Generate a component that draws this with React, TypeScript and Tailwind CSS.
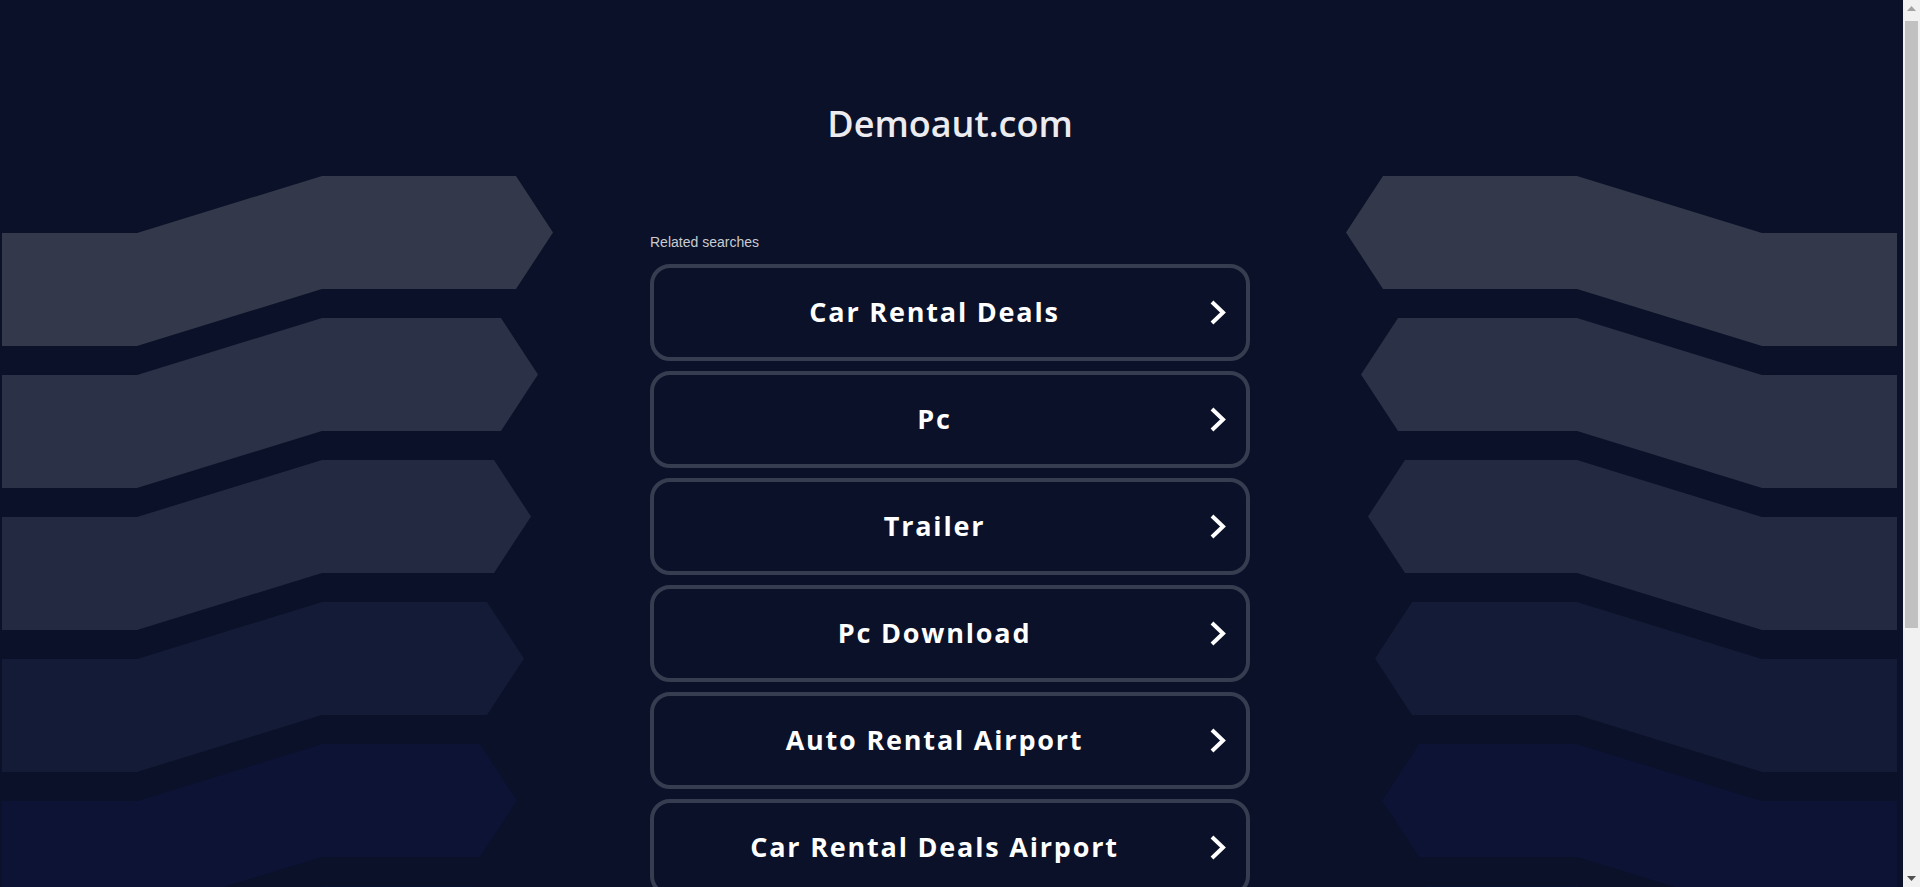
const searches = [
  "Car Rental Deals",
  "Pc",
  "Trailer",
  "Pc Download",
  "Auto Rental Airport",
  "Car Rental Deals Airport",
];

// left side ribbons, top edge of right part / where the flat part ends / fill
const ribbons = [
  { top: 176, end: 516, fill: "#33394b" },
  { top: 318, end: 501, fill: "#2b3146" },
  { top: 460, end: 494, fill: "#242942" },
  { top: 602, end: 487, fill: "#141b36" },
  { top: 744, end: 480, fill: "#0c1334" },
  { top: 886, end: 473, fill: "#0b1333" },
];

function ribbonPoints(top: number, end: number) {
  const h = 113;
  const drop = 57;
  return [
    [2, top + drop],
    [137, top + drop],
    [322, top],
    [end, top],
    [end + 37, top + h / 2],
    [end, top + h],
    [322, top + h],
    [137, top + h + drop],
    [2, top + h + drop],
  ]
    .map((p) => p.join(","))
    .join(" ");
}

function Ribbons({ mirror }: { mirror?: boolean }) {
  return (
    <svg width="650" height="887" className="block shrink-0">
      <g transform={mirror ? "translate(646,0) scale(-1,1)" : undefined}>
        {ribbons.map((r) => (
          <polygon key={r.top} points={ribbonPoints(r.top, r.end)} fill={r.fill} />
        ))}
      </g>
    </svg>
  );
}

function Chevron() {
  return (
    <svg width="16" height="25" viewBox="0 0 16 25" fill="none">
      <polyline points="2,2 13,12.5 2,23" stroke="#ffffff" strokeWidth="4" strokeLinecap="butt" strokeLinejoin="miter" />
    </svg>
  );
}

function Scrollbar() {
  return (
    <div className="flex w-[17px] shrink-0 flex-col bg-[#f1f1f1]">
      <div className="flex h-[17px] items-center justify-center">
        <svg width="9" height="5" viewBox="0 0 9 5">
          <polygon points="0,5 4.5,0 9,5" fill="#a3a3a3" />
        </svg>
      </div>
      <div className="flex-1">
        <div className="mx-[2px] mt-[4px] h-[607px] bg-[#c1c1c1]" />
      </div>
      <div className="flex h-[17px] items-center justify-center">
        <svg width="9" height="5" viewBox="0 0 9 5">
          <polygon points="0,0 9,0 4.5,5" fill="#505050" />
        </svg>
      </div>
    </div>
  );
}

export default function App() {
  return (
    <div className="flex h-[887px] overflow-hidden">
      <div className="flex flex-1 bg-[#0a1128]">
        <div className="w-[650px] shrink-0 overflow-hidden">
          <Ribbons />
        </div>
        <div className="w-[600px] shrink-0">
          <h1 className="pt-[106px] text-center text-[36px] leading-none font-semibold text-[#ebebf0] font-['Open_Sans',sans-serif]">
            Demoaut.com
          </h1>
          <p className="mt-[90px] h-5 text-sm leading-5 text-[#c9ccd3] font-['Liberation_Sans',Arial,sans-serif]">
            Related searches
          </p>
          <div className="mt-3 flex flex-col gap-[10px]">
            {searches.map((s) => (
              <a
                key={s}
                href="#"
                className="flex h-[97px] shrink-0 items-center rounded-[20px] border-4 border-[#363d50] text-white"
              >
                <span className="w-[25px] shrink-0" />
                <span className="flex-1 text-center text-[27px] font-bold tracking-[1.8px] font-['Open_Sans',sans-serif]">
                  {s}
                </span>
                <span className="flex w-[56px] shrink-0 justify-center">
                  <Chevron />
                </span>
              </a>
            ))}
          </div>
        </div>
        <div className="flex min-w-0 flex-1 justify-end overflow-hidden">
          <Ribbons mirror />
        </div>
      </div>
      <Scrollbar />
    </div>
  );
}
